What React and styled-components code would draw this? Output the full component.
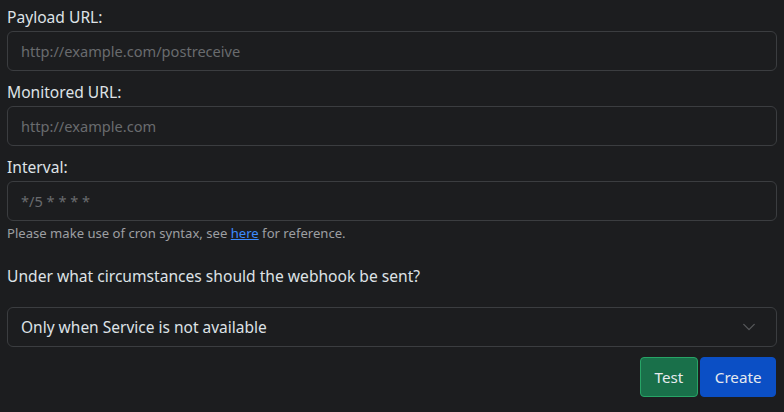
import React from 'react';
import styled, { createGlobalStyle } from 'styled-components';

const GlobalStyle = createGlobalStyle`
  html, body {
    margin: 0;
    background: #1c1d1f;
  }
  body {
    font-family: "Noto Sans", "Open Sans", sans-serif;
    color: #dee2e6;
  }
`;

const Form = styled.form`
  padding: 5px 7px 0 7px;
  display: flex;
  flex-direction: column;
`;

const Group = styled.div`
  display: flex;
  flex-direction: column;
  margin-bottom: ${p => p.$gap || 9}px;
`;

const Label = styled.label`
  font-size: 15.6px;
  line-height: 24px;
  margin-bottom: 2px;
  color: #dee2e6;
`;

const Input = styled.input`
  box-sizing: border-box;
  height: 40px;
  width: 100%;
  padding: 0 13px;
  border: 1px solid #3b3d40;
  border-radius: 6px;
  background: #1c1d1f;
  color: #dee2e6;
  font-family: inherit;
  font-size: 14.6px;
  outline: none;

  &::placeholder {
    color: #696b6e;
  }
`;

const Help = styled.div`
  font-size: 13.1px;
  line-height: 20px;
  margin-top: 2px;
  color: #9d9fa2;

  a {
    color: #3d8bfd;
    text-decoration: underline;
  }
`;

const Question = styled.p`
  margin: 12px 0 19px;
  font-size: 15.6px;
  line-height: 24px;
`;

const SelectBox = styled.div`
  box-sizing: border-box;
  height: 40px;
  display: flex;
  align-items: center;
  justify-content: space-between;
  padding: 0 20px 0 13px;
  border: 1px solid #3b3d40;
  border-radius: 6px;
  font-size: 15.5px;
  color: #dee2e6;
`;

const Actions = styled.div`
  display: flex;
  justify-content: flex-end;
  gap: 2px;
  margin-top: 10px;
  padding-right: 1px;
`;

const Button = styled.button`
  height: 40px;
  padding: 0 ${p => p.$pad}px;
  border-radius: 4px;
  font-family: inherit;
  font-size: 15.2px;
  color: #e6eaee;
  border: 1px solid ${p => p.$border};
  background: ${p => p.$bg};
  cursor: pointer;
`;

const Chevron = () => (
  <svg width="14" height="14" viewBox="0 0 16 16" fill="none">
    <path d="M2 5l6 6 6-6" stroke="#555759" strokeWidth="1.6" strokeLinecap="round" strokeLinejoin="round" />
  </svg>
);

const App = () => {
  return (
    <>
      <GlobalStyle />
      <Form onSubmit={e => e.preventDefault()}>
        <Group>
          <Label>Payload URL:</Label>
          <Input placeholder="http://example.com/postreceive" />
        </Group>
        <Group>
          <Label>Monitored URL:</Label>
          <Input placeholder="http://example.com" />
        </Group>
        <Group $gap={0}>
          <Label>Interval:</Label>
          <Input placeholder="*/5 * * * *" />
          <Help>
            Please make use of cron syntax, see <a href="#">here</a> for reference.
          </Help>
        </Group>
        <Question>Under what circumstances should the webhook be sent?</Question>
        <SelectBox>
          <span>Only when Service is not available</span>
          <Chevron />
        </SelectBox>
        <Actions>
          <Button type="button" $pad={14} $bg="#19704a" $border="#27a466">Test</Button>
          <Button type="submit" $pad={13.5} $bg="#0b4fc5" $border="#0b4fc5">Create</Button>
        </Actions>
      </Form>
    </>
  );
};

export default App;
